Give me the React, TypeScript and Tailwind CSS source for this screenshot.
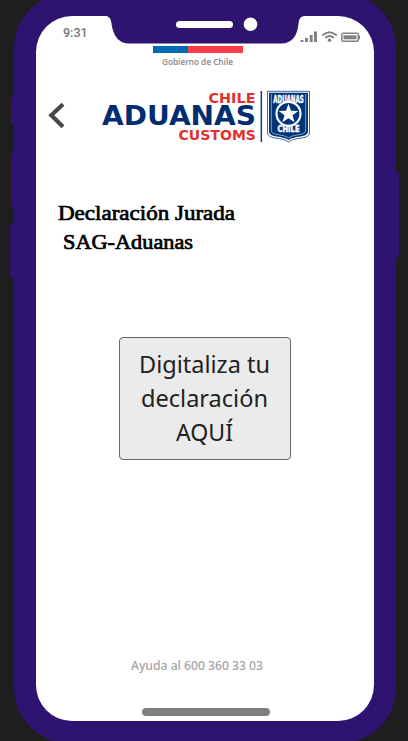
function Notch() {
  return (
    <svg className="absolute left-[107px] top-[9px] h-[42px] w-[198px]" viewBox="107 2 198 42" aria-hidden="true">
      <path d="M105 0 V16 C109.500 16.300 111 18.500 111.700 25 C113.500 36 119 43.500 129 43.500 H281.500 C291 43.500 297 37 298.300 25 C299 18.500 300.500 16.300 305 16 V0 Z" fill="#2e1470" />
      <rect x="176" y="21" width="57" height="7" rx="3.500" fill="#fff" />
      <circle cx="250.500" cy="24.300" r="6.800" fill="#fff" />
    </svg>
  );
}

function StatusIcons() {
  return (
    <svg className="h-[12px] w-[60px]" viewBox="300 31 60 12" aria-hidden="true">
      <g fill="#828282">
        <rect x="300.500" y="40" width="3" height="2" />
        <rect x="305" y="38" width="3" height="4" />
        <rect x="309.700" y="35" width="3" height="7" />
        <rect x="314" y="31.500" width="3" height="10.500" />
        <circle cx="329.500" cy="40.200" r="1.700" />
        <rect x="343.500" y="35.300" width="13" height="4" />
        <rect x="358.500" y="35.300" width="1.500" height="4" rx="0.700" />
      </g>
      <g fill="none" stroke="#828282" strokeWidth="1.800">
        <path d="M322.300 35.500 Q329.500 29 336.800 35.500" />
        <path d="M325.300 38 Q329.500 34 333.800 38" />
        <rect x="341.800" y="33.300" width="16.500" height="8" rx="1.500" strokeWidth="1.500" />
      </g>
    </svg>
  );
}

function CustomsLogo() {
  return (
    <svg className="h-[54px] w-[212px] overflow-visible" viewBox="100 89 212 54" fontFamily="'DejaVu Sans', Verdana, sans-serif" fontWeight="700">
      <text x="208.500" y="103" fontSize="13.200" textLength="47" lengthAdjust="spacingAndGlyphs" fill="#e6302d">CHILE</text>
      <text x="102" y="125.300" fontSize="26" textLength="154" lengthAdjust="spacingAndGlyphs" fill="#002d72">ADUANAS</text>
      <text x="178.500" y="140" fontSize="13.200" textLength="77.500" lengthAdjust="spacingAndGlyphs" fill="#e6302d">CUSTOMS</text>
      <rect x="260.600" y="91" width="1.500" height="51" fill="#17396f" />
      <path d="M267.500 91.300 H309.500 V133 Q309 137 302 138 Q292 139 288.500 142 Q285 139 275 138 Q268 137 267.500 133 Z" fill="#fff" stroke="#2f5590" strokeWidth="0.900" />
      <path d="M269 92.800 H308 V132 Q307.500 135.500 300.500 136.500 Q292 137.500 288.500 140 Q285 137.500 276.500 136.500 Q269.500 135.500 269 132 Z" fill="#003478" />
      <path d="M271.300 94 V131 Q272 134 279 134.800 Q285 135.500 288.500 137.800 Q292 135.500 298 134.800 Q305 134 305.700 131 V94" fill="none" stroke="#b9c8de" strokeWidth="0.700" />
      <text x="273.200" y="103" fontSize="10" textLength="30.600" lengthAdjust="spacingAndGlyphs" fill="#fff" stroke="#fff" strokeWidth="0.500">ADUANAS</text>
      <text x="277.500" y="132.300" fontSize="8" textLength="22" lengthAdjust="spacingAndGlyphs" fill="#fff" stroke="#fff" strokeWidth="0.500">CHILE</text>
      <circle cx="288.500" cy="113.800" r="12" fill="#003478" stroke="#fff" strokeWidth="2.200" />
      <path d="M288.500 103.700 L291 110.800 L298.300 111 L292.500 115.300 L294.600 122.300 L288.500 118.200 L282.400 122.300 L284.500 115.300 L278.700 111 L286 110.800 Z" fill="#fff" />
    </svg>
  );
}

function FittedLine({ text, width, className }: { text: string; width: number; className: string }) {
  return (
    <svg className={`block overflow-visible ${className}`} width={width} height="1em" aria-label={text}>
      <text x="0" y="0.860em" textLength={width} lengthAdjust="spacingAndGlyphs" fill="currentColor">{text}</text>
    </svg>
  );
}

export default function App() {
  return (
    <div className="relative h-[741px] w-[408px] overflow-hidden bg-[#1e1e1e] font-['Noto_Sans',sans-serif]">
      <span className="absolute left-[11px] top-[97px] h-[28px] w-[6px] rounded-l-[2px] bg-[#2e1470]" />
      <span className="absolute left-[11px] top-[153px] h-[54px] w-[6px] rounded-l-[2px] bg-[#2e1470]" />
      <span className="absolute left-[10px] top-[224px] h-[54px] w-[6px] rounded-l-[2px] bg-[#2e1470]" />
      <span className="absolute right-[9px] top-[172px] h-[86px] w-[6px] rounded-r-[2px] bg-[#2e1470]" />
      <div className="relative ml-[14px] -mt-[7px] flex h-[750px] w-[382px] flex-col rounded-[55px] bg-[#2e1470] pb-[22.500px] pl-[21.500px] pr-[22.500px] pt-[23px]">
        <main className="flex flex-1 flex-col overflow-hidden rounded-[36px] bg-white">
          <div className="flex h-[29px] items-start justify-between pl-[27.500px] pr-[13.500px] pt-[10px]">
            <span className="font-['Roboto',sans-serif] text-[12.500px] font-medium leading-[14px] text-[#777]">9:31</span>
            <span className="pt-[5px]"><StatusIcons /></span>
          </div>
          <div className="flex flex-col items-center">
            <div className="mt-[1px] flex h-[7px] w-[90px] self-start ml-[117.500px]">
              <span className="w-[35px] bg-[#006cb7]" />
              <span className="flex-1 bg-[#ff3c47]" />
            </div>
            <div className="ml-[126.500px] mt-[4.500px] self-start text-[8px] font-semibold text-[#909090]">
              <FittedLine text="Gobierno de Chile" width={71} className="" />
            </div>
          </div>
          <div className="mt-[23.500px] flex items-start">
            <svg className="ml-[11.500px] mt-[11px] h-[30px] w-[20px]" viewBox="47 100 20 30" fill="none" stroke="#474747" strokeWidth="4.200" aria-label="Volver">
              <path d="M63 104.300 L51.300 115.300 L63 126.700" />
            </svg>
            <div className="ml-[33px]"><CustomsLogo /></div>
          </div>
          <h1 className="ml-[22px] mt-[59px] stroke-black font-['Liberation_Serif',serif] text-[20.500px] font-normal leading-none text-black [stroke-width:0.7px]">
            <FittedLine text="Declaración Jurada" width={177} className="" />
            <FittedLine text="SAG-Aduanas" width={130} className="ml-[5px] mt-[8.500px]" />
          </h1>
          <button className="ml-[83.500px] mt-[85px] flex h-[123px] w-[171.500px] shrink-0 flex-col items-center gap-[10px] rounded-[4px] border border-[#666] bg-[#ebebeb] pt-[14px] text-[24px] leading-none text-[#222]">
            <FittedLine text="Digitaliza tu" width={131} className="" />
            <FittedLine text="declaración" width={127} className="" />
            <FittedLine text="AQUÍ" width={57} className="" />
          </button>
          <footer className="mt-auto flex flex-col">
            <div className="ml-[95px] text-[12px] font-medium text-[#a3a3a3]">
              <FittedLine text="Ayuda al 600 360 33 03" width={132} className="" />
            </div>
            <span className="mb-[4.500px] ml-[106px] mt-[36.500px] h-[8px] w-[128px] rounded-full bg-[#808080]" />
          </footer>
        </main>
        <div className="pointer-events-none absolute -left-[14px] top-0"><Notch /></div>
      </div>
    </div>
  );
}
